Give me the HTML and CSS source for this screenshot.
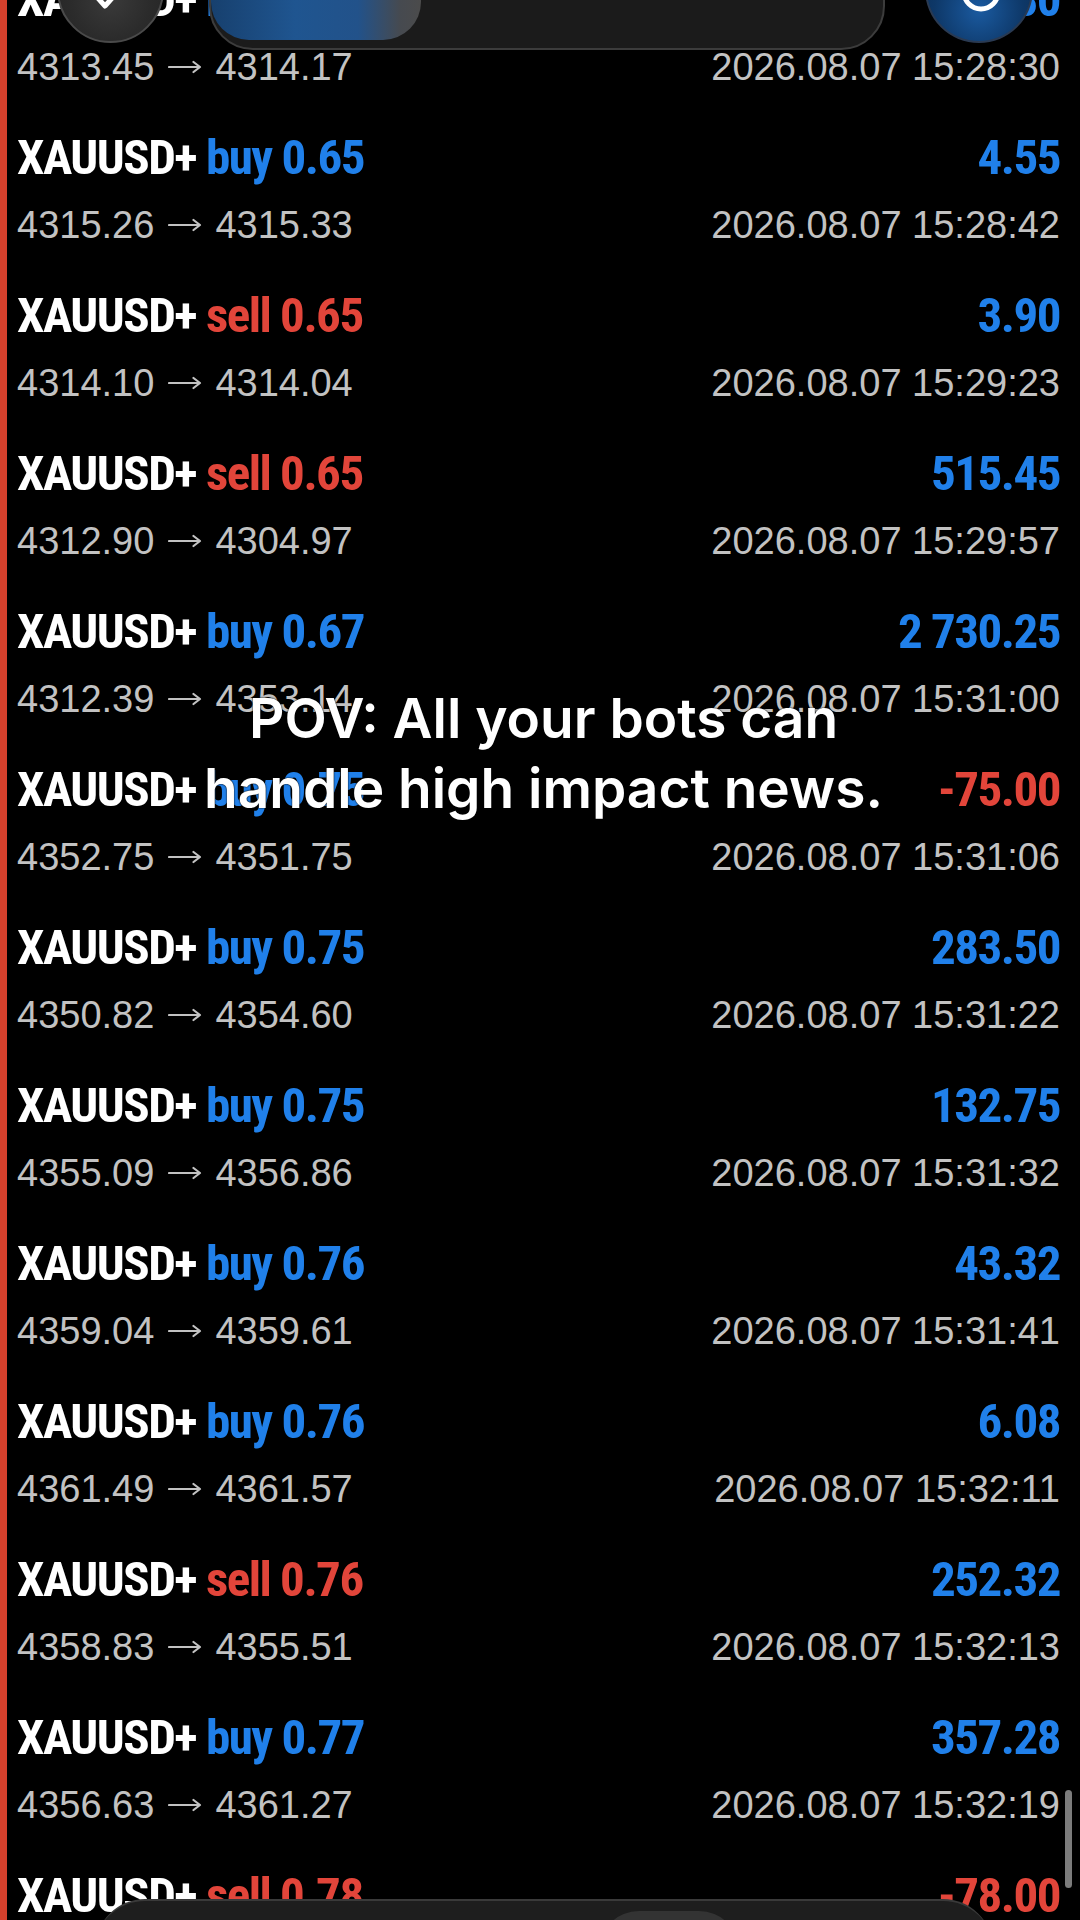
FILE: index.html
```html
<!DOCTYPE html>
<html>
<head>
<meta charset="utf-8">
<link rel="stylesheet" href="styles.css">
</head>
<body>
<div class="screen">
  <div class="list">
    <div class="row"><div class="l1"><span><span class="sym">XAUUSD+</span> <span class="buy">buy 0.65</span></span><span class="pos">46.80</span></div><div class="l2"><span>4313.45<svg class="arr" width="34" height="30" viewBox="0 0 34 30"><path d="M1 17H32M25.5 12L32 17L25.5 22" fill="none" stroke="#c2c2c2" stroke-width="2.2" stroke-linecap="round" stroke-linejoin="round"/></svg>4314.17</span><span>2026.08.07 15:28:30</span></div></div>
    <div class="row"><div class="l1"><span><span class="sym">XAUUSD+</span> <span class="buy">buy 0.65</span></span><span class="pos">4.55</span></div><div class="l2"><span>4315.26<svg class="arr" width="34" height="30" viewBox="0 0 34 30"><path d="M1 17H32M25.5 12L32 17L25.5 22" fill="none" stroke="#c2c2c2" stroke-width="2.2" stroke-linecap="round" stroke-linejoin="round"/></svg>4315.33</span><span>2026.08.07 15:28:42</span></div></div>
    <div class="row"><div class="l1"><span><span class="sym">XAUUSD+</span> <span class="sell">sell 0.65</span></span><span class="pos">3.90</span></div><div class="l2"><span>4314.10<svg class="arr" width="34" height="30" viewBox="0 0 34 30"><path d="M1 17H32M25.5 12L32 17L25.5 22" fill="none" stroke="#c2c2c2" stroke-width="2.2" stroke-linecap="round" stroke-linejoin="round"/></svg>4314.04</span><span>2026.08.07 15:29:23</span></div></div>
    <div class="row"><div class="l1"><span><span class="sym">XAUUSD+</span> <span class="sell">sell 0.65</span></span><span class="pos">515.45</span></div><div class="l2"><span>4312.90<svg class="arr" width="34" height="30" viewBox="0 0 34 30"><path d="M1 17H32M25.5 12L32 17L25.5 22" fill="none" stroke="#c2c2c2" stroke-width="2.2" stroke-linecap="round" stroke-linejoin="round"/></svg>4304.97</span><span>2026.08.07 15:29:57</span></div></div>
    <div class="row"><div class="l1"><span><span class="sym">XAUUSD+</span> <span class="buy">buy 0.67</span></span><span class="pos">2 730.25</span></div><div class="l2"><span>4312.39<svg class="arr" width="34" height="30" viewBox="0 0 34 30"><path d="M1 17H32M25.5 12L32 17L25.5 22" fill="none" stroke="#c2c2c2" stroke-width="2.2" stroke-linecap="round" stroke-linejoin="round"/></svg>4353.14</span><span>2026.08.07 15:31:00</span></div></div>
    <div class="row"><div class="l1"><span><span class="sym">XAUUSD+</span> <span class="buy">buy 0.75</span></span><span class="neg">-75.00</span></div><div class="l2"><span>4352.75<svg class="arr" width="34" height="30" viewBox="0 0 34 30"><path d="M1 17H32M25.5 12L32 17L25.5 22" fill="none" stroke="#c2c2c2" stroke-width="2.2" stroke-linecap="round" stroke-linejoin="round"/></svg>4351.75</span><span>2026.08.07 15:31:06</span></div></div>
    <div class="row"><div class="l1"><span><span class="sym">XAUUSD+</span> <span class="buy">buy 0.75</span></span><span class="pos">283.50</span></div><div class="l2"><span>4350.82<svg class="arr" width="34" height="30" viewBox="0 0 34 30"><path d="M1 17H32M25.5 12L32 17L25.5 22" fill="none" stroke="#c2c2c2" stroke-width="2.2" stroke-linecap="round" stroke-linejoin="round"/></svg>4354.60</span><span>2026.08.07 15:31:22</span></div></div>
    <div class="row"><div class="l1"><span><span class="sym">XAUUSD+</span> <span class="buy">buy 0.75</span></span><span class="pos">132.75</span></div><div class="l2"><span>4355.09<svg class="arr" width="34" height="30" viewBox="0 0 34 30"><path d="M1 17H32M25.5 12L32 17L25.5 22" fill="none" stroke="#c2c2c2" stroke-width="2.2" stroke-linecap="round" stroke-linejoin="round"/></svg>4356.86</span><span>2026.08.07 15:31:32</span></div></div>
    <div class="row"><div class="l1"><span><span class="sym">XAUUSD+</span> <span class="buy">buy 0.76</span></span><span class="pos">43.32</span></div><div class="l2"><span>4359.04<svg class="arr" width="34" height="30" viewBox="0 0 34 30"><path d="M1 17H32M25.5 12L32 17L25.5 22" fill="none" stroke="#c2c2c2" stroke-width="2.2" stroke-linecap="round" stroke-linejoin="round"/></svg>4359.61</span><span>2026.08.07 15:31:41</span></div></div>
    <div class="row"><div class="l1"><span><span class="sym">XAUUSD+</span> <span class="buy">buy 0.76</span></span><span class="pos">6.08</span></div><div class="l2"><span>4361.49<svg class="arr" width="34" height="30" viewBox="0 0 34 30"><path d="M1 17H32M25.5 12L32 17L25.5 22" fill="none" stroke="#c2c2c2" stroke-width="2.2" stroke-linecap="round" stroke-linejoin="round"/></svg>4361.57</span><span>2026.08.07 15:32:11</span></div></div>
    <div class="row"><div class="l1"><span><span class="sym">XAUUSD+</span> <span class="sell">sell 0.76</span></span><span class="pos">252.32</span></div><div class="l2"><span>4358.83<svg class="arr" width="34" height="30" viewBox="0 0 34 30"><path d="M1 17H32M25.5 12L32 17L25.5 22" fill="none" stroke="#c2c2c2" stroke-width="2.2" stroke-linecap="round" stroke-linejoin="round"/></svg>4355.51</span><span>2026.08.07 15:32:13</span></div></div>
    <div class="row"><div class="l1"><span><span class="sym">XAUUSD+</span> <span class="buy">buy 0.77</span></span><span class="pos">357.28</span></div><div class="l2"><span>4356.63<svg class="arr" width="34" height="30" viewBox="0 0 34 30"><path d="M1 17H32M25.5 12L32 17L25.5 22" fill="none" stroke="#c2c2c2" stroke-width="2.2" stroke-linecap="round" stroke-linejoin="round"/></svg>4361.27</span><span>2026.08.07 15:32:19</span></div></div>
    <div class="row"><div class="l1"><span><span class="sym">XAUUSD+</span> <span class="sell">sell 0.78</span></span><span class="neg">-78.00</span></div><div class="l2"><span>4361.27<svg class="arr" width="34" height="30" viewBox="0 0 34 30"><path d="M1 17H32M25.5 12L32 17L25.5 22" fill="none" stroke="#c2c2c2" stroke-width="2.2" stroke-linecap="round" stroke-linejoin="round"/></svg>4360.27</span><span>2026.08.07 15:32:25</span></div></div>
  </div>

  <div class="topbar">
    <div class="circ left">
      <svg class="chev" width="30" height="20" viewBox="0 0 30 20"><path d="M6 -4 L15 6 L24 -4" fill="none" stroke="#fff" stroke-width="5" stroke-linecap="round" stroke-linejoin="round"/></svg>
    </div>
    <div class="pill"><div class="seg"></div></div>
    <div class="circ right">
      <svg class="ring" width="60" height="30" viewBox="0 0 60 30"><circle cx="30" cy="-8" r="17" fill="none" stroke="#fff" stroke-width="5"/></svg>
    </div>
  </div>

  <div class="caption">
    <div>POV: All your bots can</div>
    <div>handle high impact news.</div>
  </div>

  <div class="scrollbar"></div>

  <div class="bottombar"><div class="inner"></div></div>
</div>
</body>
</html>
```
FILE: styles.css
```css
html, body {
  margin: 0;
  padding: 0;
  background: #000;
}
.screen {
  position: relative;
  width: 1080px;
  height: 1920px;
  overflow: hidden;
  background: #000;
  box-sizing: border-box;
  border-left: 7px solid #d5402c;
}
.list {
  margin-top: -31px;
  padding-left: 10px;
  padding-right: 20px;
}
.row {
  height: 158px;
  box-sizing: border-box;
}
.l1 {
  display: flex;
  justify-content: space-between;
  height: 62px;
  line-height: 62px;
  font-family: Roboto, "DejaVu Sans Condensed", sans-serif;
  font-stretch: 75%;
  font-variation-settings: "wdth" 75;
  font-weight: 700;
  font-size: 49px;
  letter-spacing: -1.5px;
  white-space: nowrap;
}
.sym { color: #fff; }
.buy, .pos { color: #2080ea; }
.sell, .neg { color: #e2453a; }
.l2 {
  display: flex;
  justify-content: space-between;
  height: 72px;
  line-height: 72px;
  font-family: "Liberation Sans", Arial, sans-serif;
  font-size: 38px;
  color: #c2c2c2;
  white-space: nowrap;
}
.arr {
  vertical-align: baseline;
  margin: 0 13px 0 14px;
}
.topbar {
  position: absolute;
  top: 0;
  left: 0;
  width: 1080px;
  height: 60px;
}
.circ {
  position: absolute;
  top: -64px;
  width: 107px;
  height: 107px;
  border-radius: 50%;
  box-sizing: border-box;
  border: 2px solid #4a4a4a;
}
.circ.left {
  left: 50px;
  background: radial-gradient(circle at 50% 60%, #3a3a3a 0%, #2b2b2b 50%, #222 100%);
}
.circ.right {
  left: 918px;
  width: 108px;
  background: radial-gradient(circle at 50% 70%, #1a5aa0 0%, #0e3868 50%, #0a2547 100%);
  border-color: #2a3a52;
}
.chev {
  position: absolute;
  left: 31px;
  top: 62px;
}
.ring {
  position: absolute;
  left: 24px;
  top: 62px;
}
.pill {
  position: absolute;
  left: 202px;
  top: -40px;
  width: 676px;
  height: 90px;
  box-sizing: border-box;
  border-radius: 0 0 44px 44px;
  background: #1b1b1b;
  border: 2px solid #3c3c3c;
  overflow: hidden;
}
.seg {
  position: absolute;
  left: 0;
  top: 0;
  width: 210px;
  height: 78px;
  border-radius: 0 0 38px 38px;
  background: linear-gradient(90deg, #17406e 0%, #1f5590 40%, #22528a 70%, #464a50 90%, #4b4b4b 100%);
}
.caption {
  position: absolute;
  left: 0;
  right: 0;
  top: 683px;
  text-align: center;
  font-family: "Inter", "Open Sans", sans-serif;
  font-weight: 600;
  font-size: 55px;
  line-height: 70px;
  letter-spacing: 0;
  color: #fff;
  text-shadow: 0 0 2px rgba(0,0,0,0.9), 0 0 1px #000;
}
.scrollbar {
  position: absolute;
  right: 8px;
  top: 1790px;
  width: 7px;
  height: 98px;
  border-radius: 4px;
  background: #7c7c7c;
}
.bottombar {
  position: absolute;
  left: 88px;
  top: 1899px;
  width: 898px;
  height: 120px;
  border-radius: 50px 50px 0 0;
  background: #1e1e1e;
  border-top: 2px solid #3a3a3a;
  box-sizing: border-box;
}
.inner {
  position: absolute;
  left: 504px;
  top: 10px;
  width: 140px;
  height: 80px;
  border-radius: 40px;
  background: #333;
}
```
